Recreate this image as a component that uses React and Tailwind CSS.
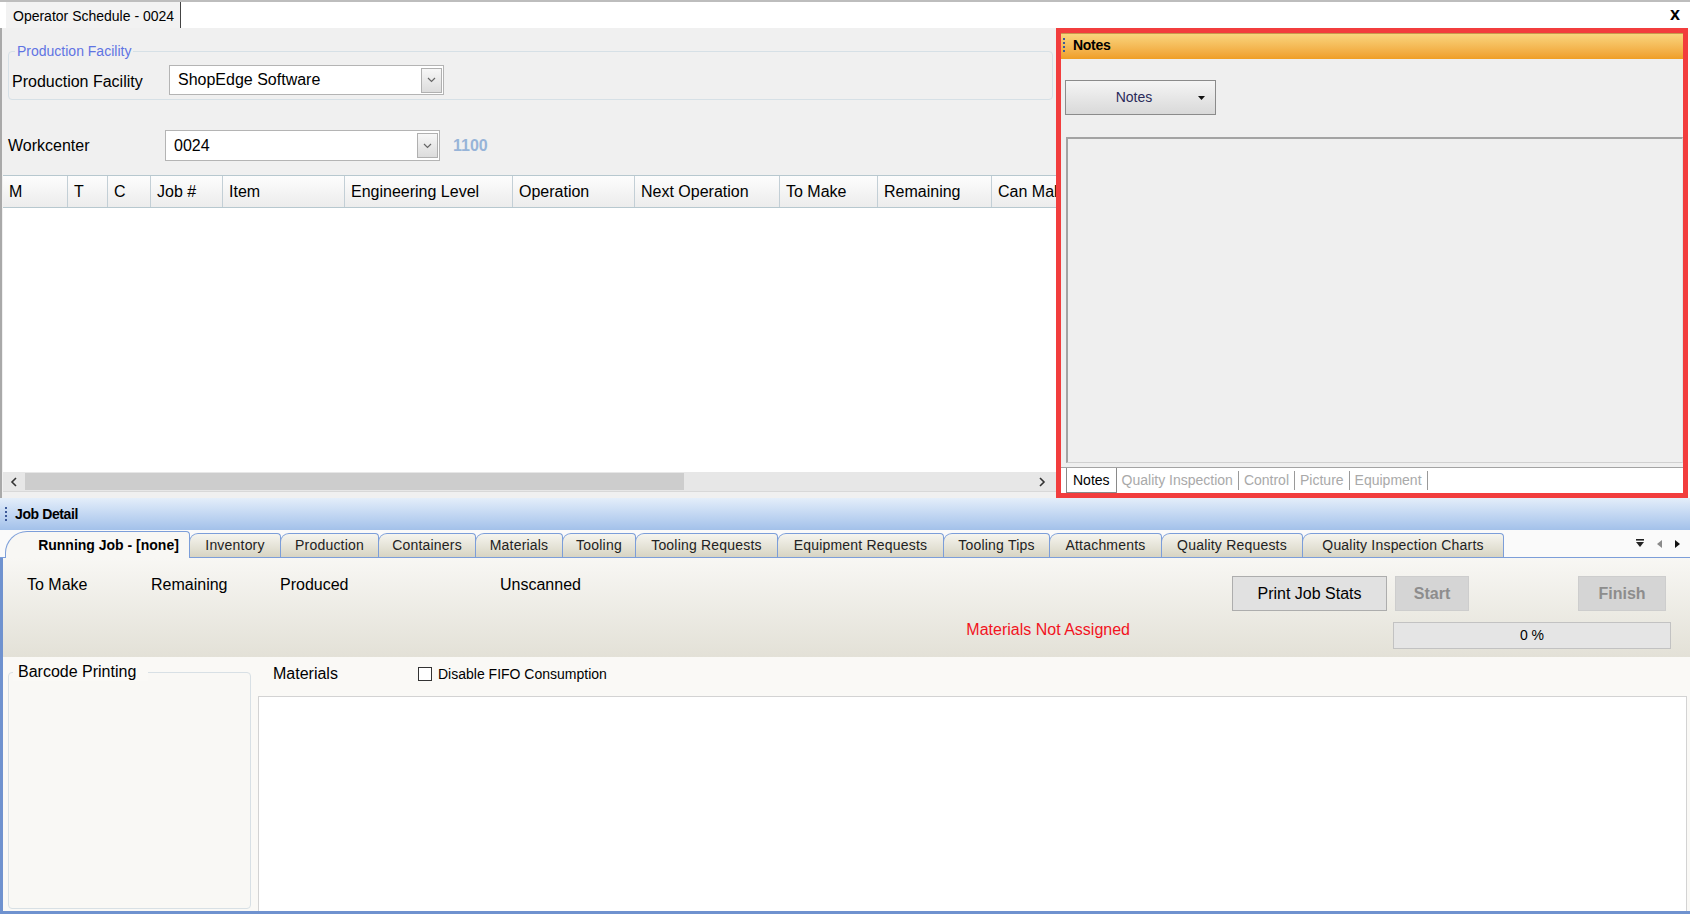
import React from 'react';

const cols = [
  ['M', 65], ['T', 40], ['C', 43], ['Job #', 72], ['Item', 122], ['Engineering Level', 168],
  ['Operation', 122], ['Next Operation', 145], ['To Make', 98], ['Remaining', 114], ['Can Make', 120],
];

const tabs = [
  ['Inventory', 92], ['Production', 99], ['Containers', 98], ['Materials', 88], ['Tooling', 74],
  ['Tooling Requests', 143], ['Equipment Requests', 167], ['Tooling Tips', 107], ['Attachments', 113],
  ['Quality Requests', 142], ['Quality Inspection Charts', 202],
];

function Grip() {
  return (
    <div className="flex flex-col gap-[2px]">
      <span className="w-[2px] h-[2px] bg-[#3d5a99]" />
      <span className="w-[2px] h-[2px] bg-[#3d5a99]" />
      <span className="w-[2px] h-[2px] bg-[#3d5a99]" />
      <span className="w-[2px] h-[2px] bg-[#3d5a99]" />
    </div>
  );
}

function Combo({ value, className }) {
  return (
    <div className={`flex items-center justify-between bg-white border border-[#b4b4b4] ${className}`}>
      <span className="pl-[8px] text-[16px] leading-[18px]">{value}</span>
      <div className="mr-[1px] w-[21px] h-[25px] border border-[#b0b0b0] bg-linear-to-b from-[#f7f7f7] to-[#dcdcdc] flex items-center justify-center">
        <svg width="9" height="6" viewBox="0 0 9 6">
          <path d="M1 1l3.5 3.5L8 1" fill="none" stroke="#666" strokeWidth="1.2" />
        </svg>
      </div>
    </div>
  );
}

function Chevron({ dir }) {
  return (
    <svg width="8" height="10" viewBox="0 0 8 10">
      <path d={dir === 'left' ? 'M6 1L2 5l4 4' : 'M2 1l4 4-4 4'} fill="none" stroke="#333" strokeWidth="1.6" />
    </svg>
  );
}

export default function App() {
  return (
    <div className="w-[1690px] h-[914px] overflow-hidden flex flex-col bg-white text-black font-['Liberation_Sans',Arial,sans-serif]">
      {/* document tab strip */}
      <div className="h-[28px] shrink-0 border-t-2 border-[#bdbdbd] flex items-stretch bg-white">
        <div className="ml-[6px] w-[175px] pl-[7px] pt-[2px] bg-[#f2f2f2] border-r border-[#444] flex items-center text-[14px] leading-none">
          Operator Schedule - 0024
        </div>
        <div className="flex-1" />
        <div className="w-[30px] flex items-center justify-center font-bold text-[18px] leading-none pb-[3px]">x</div>
      </div>

      {/* upper area */}
      <div className="h-[470px] shrink-0 flex">
        <div className="w-[1056px] shrink-0 bg-[#f0f0f0] border-l-2 border-[#a9a9a9] flex flex-col">
          <div className="relative ml-[6px] mr-[3px] mt-[23px] h-[49px] border border-[#d6e0e6] rounded-[4px] flex items-start pt-[13px]">
            <span className="absolute left-[6px] top-[-9px] px-[2px] bg-[#f0f0f0] text-[14px] leading-[16px] text-[#5f74e3]">
              Production Facility
            </span>
            <span className="ml-[3px] w-[157px] text-[16px] leading-[18px] pt-[8px]">Production Facility</span>
            <Combo value="ShopEdge Software" className="w-[275px] h-[30px]" />
          </div>

          <div className="mt-[30px] h-[31px] flex items-center">
            <span className="ml-[6px] w-[157px] text-[16px] leading-[18px]">Workcenter</span>
            <Combo value="0024" className="w-[275px] h-[31px]" />
            <span className="ml-[13px] text-[16px] font-bold text-[#97b4d8]">1100</span>
          </div>

          <div className="mt-[14px] ml-[1px] flex flex-col flex-1 min-h-0">
            <div className="h-[33px] flex border-y border-[#b7c8cf] overflow-hidden">
              {cols.map(([name, w]) => (
                <div
                  key={name}
                  style={{ width: w }}
                  className="shrink-0 h-full border-r border-[#c3cfd6] bg-linear-to-b from-[#fdfdfd] to-[#ececec] flex items-center pl-[6px] text-[16px] whitespace-nowrap"
                >
                  {name}
                </div>
              ))}
            </div>
            <div className="flex-1 bg-white" />
            <div className="h-[19px] bg-[#e7e7e7] flex items-center">
              <div className="w-[22px] flex justify-center"><Chevron dir="left" /></div>
              <div className="w-[659px] h-[17px] bg-[#cdcdcd]" />
              <div className="flex-1" />
              <div className="w-[22px] mr-[3px] flex justify-center"><Chevron dir="right" /></div>
            </div>
            <div className="h-[7px] border-t border-[#d8d8d8] bg-[#f0f0f0]" />
          </div>
        </div>

        {/* notes panel */}
        <div className="flex-1 mr-[2px] border-[5px] border-[#f23d3d] bg-[#efefef] flex flex-col">
          <div className="h-[26px] shrink-0 border-t border-[#c79a4a] bg-linear-to-b from-[#f9d57c] to-[#ef9e24] flex items-center gap-[8px] pl-[2px] pb-[3px]">
            <Grip />
            <span className="font-bold text-[14px] tracking-[-0.3px]">Notes</span>
          </div>
          <div className="pt-[21px] pl-[4px]">
            <div className="w-[151px] h-[35px] border border-[#8b8b8b] bg-linear-to-b from-[#f5f5f5] to-[#d9d9d9] flex items-center">
              <span className="flex-1 text-center text-[14px] text-[#2a2a5a] pl-[4px]">Notes</span>
              <svg width="7" height="4" viewBox="0 0 7 4" className="mr-[10px]">
                <path d="M0 0h7L3.5 4z" fill="#111" />
              </svg>
            </div>
          </div>
          <div className="mt-[22px] ml-[5px] h-[326px] border-t-2 border-l-2 border-[#a3a3a3] border-r border-b border-r-[#e0e0e0] border-b-[#d0d0d0] bg-[#efefef]" />
          <div className="mt-[4px] h-[26px] flex-1 bg-white border-t border-[#a3a3a3] flex items-stretch text-[14px]">
            <div className="ml-[5px] px-[6px] border-l border-b border-r border-[#8a8a8a] bg-white flex items-center">Notes</div>
            {['Quality Inspection', 'Control', 'Picture', 'Equipment'].map((t) => (
              <div key={t} className="px-[5px] my-[3px] border-r border-[#9a9a9a] text-[#a9a9a9] flex items-center">{t}</div>
            ))}
          </div>
        </div>
      </div>

      {/* job detail */}
      <div className="flex-1 flex flex-col min-h-0">
        <div className="h-[32px] shrink-0 bg-linear-to-b from-[#e4eefa] to-[#a3c1ea] flex items-center gap-[8px] pl-[5px]">
          <Grip />
          <span className="font-bold text-[14px] tracking-[-0.4px]">Job Detail</span>
        </div>

        <div className="h-[28px] shrink-0 bg-[#fafafa] border-b border-[#7c9ed9] flex items-end pl-[5px]">
          <div className="w-[185px] h-[27px] mb-[-1px] relative z-10 border border-b-0 border-[#7c9ed9] rounded-tl-[22px] rounded-tr-[4px] bg-[#f8f7f4] flex items-center justify-center pl-[22px] font-bold text-[14px]">
            Running Job - [none]
          </div>
          {tabs.map(([t, w]) => (
            <div
              key={t}
              style={{ width: w }}
              className="h-[24px] ml-[-1px] shrink-0 border border-b-0 border-[#7c9ed9] rounded-tl-[9px] rounded-tr-[4px] bg-linear-to-b from-[#f6f5ef] to-[#d7d4c3] flex items-center justify-center text-[14px] text-[#222] tracking-[0.2px] whitespace-nowrap"
            >
              {t}
            </div>
          ))}
          <div className="ml-auto mr-[9px] self-center flex items-center gap-[11px]">
            <svg width="10" height="9" viewBox="0 0 10 9">
              <rect x="1" y="0" width="8" height="1.6" fill="#222" />
              <path d="M1 3h8L5 8z" fill="#222" />
            </svg>
            <svg width="7" height="10" viewBox="0 0 7 10"><path d="M6 1L1 5l5 4z" fill="#8a8a8a" /></svg>
            <svg width="7" height="10" viewBox="0 0 7 10"><path d="M1 1l5 4-5 4z" fill="#111" /></svg>
          </div>
        </div>

        <div className="flex-1 min-h-0 flex flex-col border-l-[3px] border-b-[3px] border-[#6f92cf]">
          <div className="h-[99px] shrink-0 bg-linear-to-b from-[#f8f7f4] to-[#e3e1d7] flex flex-col">
            <div className="mt-[18px] h-[35px] flex items-start text-[16px] leading-[18px]">
              <span className="ml-[24px] w-[124px]">To Make</span>
              <span className="w-[129px]">Remaining</span>
              <span className="w-[220px]">Produced</span>
              <span>Unscanned</span>
              <div className="flex-1" />
              <div className="w-[155px] h-[35px] bg-[#e1e1e1] border border-[#adadad] flex items-center justify-center">Print Job Stats</div>
              <div className="ml-[8px] w-[74px] h-[35px] bg-[#d5d5d5] border border-[#cdcdcd] flex items-center justify-center font-bold text-[#8d8d8d]">Start</div>
              <div className="ml-[109px] w-[88px] h-[35px] bg-[#d5d5d5] border border-[#cdcdcd] flex items-center justify-center font-bold text-[#8d8d8d]">Finish</div>
              <div className="w-[24px]" />
            </div>
            <div className="mt-[11px] flex items-start justify-end">
              <span className="mt-[-1px] text-[16px] leading-[18px] text-[#f2141e]">Materials Not Assigned</span>
              <div className="ml-[263px] mr-[19px] w-[278px] h-[27px] bg-[#e5e5e5] border border-[#c2c2c2] flex items-center justify-center text-[14px]">
                0 %
              </div>
            </div>
          </div>

          <div className="flex-1 min-h-0 bg-[#faf9f6] flex">
            <div className="relative ml-[5px] mt-[15px] mb-[2px] w-[243px] border border-[#d8e0e5] rounded-[4px] bg-[#f9f8f5]">
              <span className="absolute left-[4px] top-[-10px] pr-[12px] pl-[5px] bg-[#faf9f6] text-[16px] leading-[18px]">Barcode Printing</span>
            </div>
            <div className="ml-[7px] flex-1 flex flex-col">
              <div className="h-[39px] shrink-0 flex items-start pt-[8px] text-[16px] leading-[18px]">
                <span className="ml-[15px] w-[145px]">Materials</span>
                <span className="mt-[2px] w-[14px] h-[14px] border border-[#333] bg-white" />
                <span className="ml-[6px] text-[14px]">Disable FIFO Consumption</span>
              </div>
              <div className="flex-1 mr-[3px] bg-white border-t border-l border-r border-[#d3d3d3]" />
            </div>
          </div>
        </div>
      </div>
    </div>
  );
}
